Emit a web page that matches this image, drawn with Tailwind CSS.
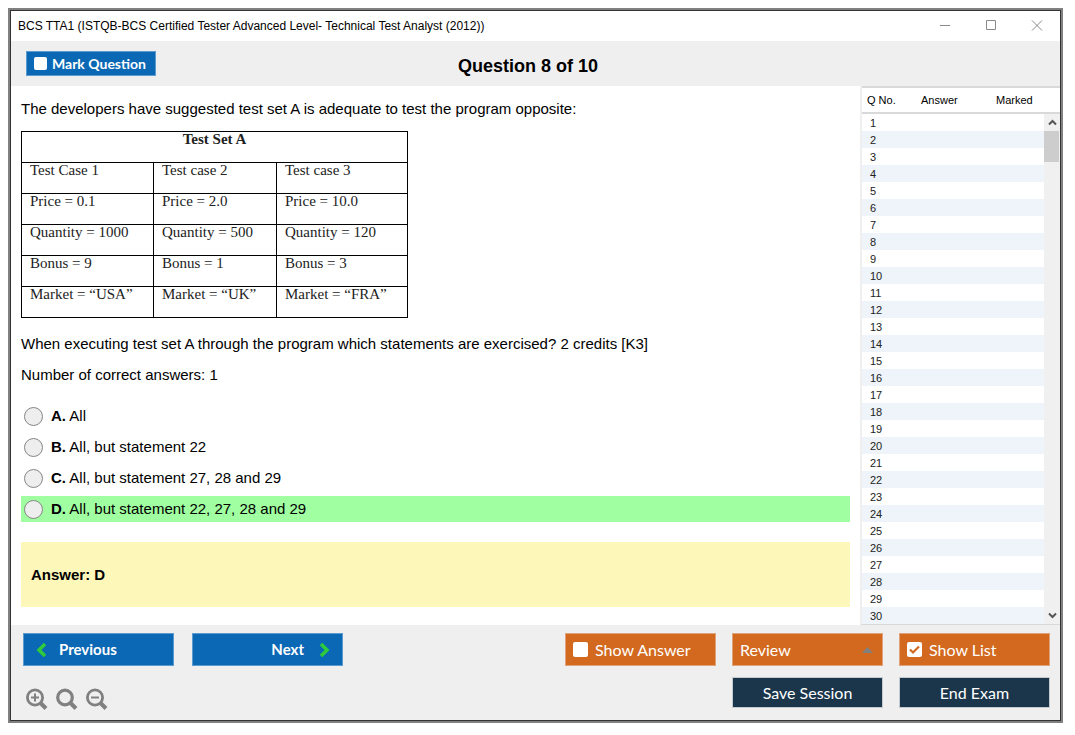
<!DOCTYPE html>
<html lang="en">
<head>
  <meta charset="UTF-8">
  <meta name="viewport" content="width=device-width, initial-scale=1.0">
  <title>BCS TTA1 Exam</title>

  <!-- Tailwind CSS -->
  <script src="https://cdn.jsdelivr.net/npm/@tailwindcss/browser@4"></script>
</head>
<body class="flex min-h-screen bg-white pt-2 pr-3 pb-3 pl-2 font-['Liberation_Sans',sans-serif] text-black">

  <!-- Window -->
  <div class="flex flex-1 flex-col border-2 border-[#808080]">
    <div class="flex flex-1 flex-col border border-[#333333] bg-[#efefef]">

      <!-- Title bar -->
      <header class="flex h-[30px] items-center justify-between bg-white pl-[7px] pr-[17px]">
        <span class="text-[12px]">BCS TTA1 (ISTQB-BCS Certified Tester Advanced Level- Technical Test Analyst (2012))</span>
        <div class="flex gap-[34px] text-[#8a8a8a]">
          <button type="button" aria-label="Minimize">
            <svg class="size-3" viewBox="0 0 12 12" fill="none" stroke="currentColor"><path d="M1 5.500h10"/></svg>
          </button>
          <button type="button" aria-label="Maximize">
            <svg class="size-3" viewBox="0 0 12 12" fill="none" stroke="currentColor"><path d="M1.500 .5h9v9h-9z"/></svg>
          </button>
          <button type="button" aria-label="Close">
            <svg class="size-3" viewBox="0 0 12 12" fill="none" stroke="currentColor"><path d="M1 .5l10 10M11 .5L1 10.500"/></svg>
          </button>
        </div>
      </header>

      <!-- Question header -->
      <div class="grid h-[45px] grid-cols-3 items-center pr-[30px] pl-[15px]">
        <label class="flex h-[25px] w-[130px] items-center gap-[5px] border border-[#5b9bd0] bg-[#0a68b5] pl-[7px] font-['Lato',sans-serif] text-[14px] font-bold text-white">
          <input type="checkbox" class="size-[13px] appearance-none rounded-xs bg-white">
          Mark Question
        </label>
        <h1 class="pt-[5px] text-center text-[18px] font-bold">Question 8 of 10</h1>
      </div>

      <!-- Content -->
      <div class="flex flex-1 bg-white">
        <main class="flex-1 px-[10px] pt-[14px] text-[15px] leading-[18px]">
          <p>The developers have suggested test set A is adequate to test the program opposite:</p>

          <table class="mt-[13px] w-[387px] table-fixed border-collapse font-['Liberation_Serif',serif] text-[15px] leading-[15px] text-[#222222]">
            <colgroup>
              <col class="w-[132px]">
              <col class="w-[123px]">
              <col>
            </colgroup>
            <thead>
              <tr class="h-[31px] align-top"><th colspan="3" class="border border-black font-bold">Test Set A</th></tr>
            </thead>
            <tbody>
              <tr class="h-[31px] align-top"><td class="border border-black pl-2">Test Case 1</td><td class="border border-black pl-2">Test case 2</td><td class="border border-black pl-2">Test case 3</td></tr>
              <tr class="h-[31px] align-top"><td class="border border-black pl-2">Price = 0.1</td><td class="border border-black pl-2">Price = 2.0</td><td class="border border-black pl-2">Price = 10.0</td></tr>
              <tr class="h-[31px] align-top"><td class="border border-black pl-2">Quantity = 1000</td><td class="border border-black pl-2">Quantity = 500</td><td class="border border-black pl-2">Quantity = 120</td></tr>
              <tr class="h-[31px] align-top"><td class="border border-black pl-2">Bonus = 9</td><td class="border border-black pl-2">Bonus = 1</td><td class="border border-black pl-2">Bonus = 3</td></tr>
              <tr class="h-[31px] align-top"><td class="border border-black pl-2">Market = “USA”</td><td class="border border-black pl-2">Market = “UK”</td><td class="border border-black pl-2">Market = “FRA”</td></tr>
            </tbody>
          </table>

          <p class="mt-[17px]">When executing test set A through the program which statements are exercised? 2 credits [K3]</p>
          <p class="mt-[13px]">Number of correct answers: 1</p>

          <!-- Options -->
          <div class="mt-[19px] flex flex-col gap-[5px]">
            <label class="flex h-[26px] items-center gap-2 pl-[3px]">
              <input type="radio" name="answer" class="size-[19px] appearance-none rounded-full border border-[#858585] bg-[#eeeeee]">
              <span><b>A.</b> All</span>
            </label>
            <label class="flex h-[26px] items-center gap-2 pl-[3px]">
              <input type="radio" name="answer" class="size-[19px] appearance-none rounded-full border border-[#858585] bg-[#eeeeee]">
              <span><b>B.</b> All, but statement 22</span>
            </label>
            <label class="flex h-[26px] items-center gap-2 pl-[3px]">
              <input type="radio" name="answer" class="size-[19px] appearance-none rounded-full border border-[#858585] bg-[#eeeeee]">
              <span><b>C.</b> All, but statement 27, 28 and 29</span>
            </label>
            <label class="flex h-[26px] items-center gap-2 bg-[#a0ffa0] pl-[3px]">
              <input type="radio" name="answer" class="size-[19px] appearance-none rounded-full border border-[#858585] bg-[#eeeeee]">
              <span><b>D.</b> All, but statement 22, 27, 28 and 29</span>
            </label>
          </div>

          <div class="mt-5 flex h-[65px] items-center bg-[#fdf7b9] px-[10px] font-bold">Answer: D</div>
        </main>

        <!-- Question list -->
        <aside class="flex w-[200px] border-b border-l-2 border-b-[#d9d9d9] border-l-[#efefef] text-[11px] text-[#222222]">
          <div class="flex-1">
            <table class="w-full table-fixed border-separate border-spacing-0">
              <thead>
                <tr class="text-left leading-[15px] text-black">
                  <th class="h-[28px] w-[54px] border-y-2 border-[#d9d9d9] pl-[5px] font-normal">Q No.</th>
                  <th class="h-[28px] w-[75px] border-y-2 border-[#d9d9d9] pl-[5px] font-normal">Answer</th>
                  <th class="h-[28px] border-y-2 border-[#d9d9d9] pl-[5px] font-normal">Marked</th>
                </tr>
              </thead>
              <tbody id="question-list"></tbody>
            </table>
          </div>
          <div class="flex w-4 flex-col bg-[#f0f0f0] text-[#555555]">
            <div class="h-[28px] border-y-2 border-[#d9d9d9] bg-white"></div>
            <button type="button" aria-label="Scroll up" class="flex h-[17px] items-center justify-center">
              <svg class="h-[7px] w-[9px]" viewBox="0 0 9 7" fill="none" stroke="currentColor" stroke-width="2"><path d="M1 5.500L4.500 2L8 5.500"/></svg>
            </button>
            <div class="h-[31px] w-[15px] bg-[#cdcdcd]"></div>
            <button type="button" aria-label="Scroll down" class="mt-auto flex h-[17px] items-center justify-center">
              <svg class="h-[7px] w-[9px]" viewBox="0 0 9 7" fill="none" stroke="currentColor" stroke-width="2"><path d="M1 1.500L4.500 5L8 1.500"/></svg>
            </button>
          </div>
        </aside>
      </div>

      <!-- Footer -->
      <footer class="flex justify-between pt-2 pr-[10px] pb-[10px] pl-3 font-['Lato',sans-serif] text-[16px] text-white">
        <div>
          <div class="flex gap-[18px] text-[15px] font-bold">
            <button type="button" class="flex h-[33px] w-[151px] items-center gap-3 border border-[#5b9bd0] bg-[#0a68b5] pl-3">
              <svg class="h-4 w-[11px]" viewBox="0 0 11 16" fill="none" stroke="#2fcb3b" stroke-width="3.500"><path d="M9 2L3 8l6 6"/></svg>
              Previous
            </button>
            <button type="button" class="flex h-[33px] w-[151px] items-center justify-end gap-[15px] border border-[#5b9bd0] bg-[#0a68b5] pr-3">
              Next
              <svg class="h-4 w-[11px]" viewBox="0 0 11 16" fill="none" stroke="#2fcb3b" stroke-width="3.500"><path d="M2 2l6 6-6 6"/></svg>
            </button>
          </div>
          <!-- Zoom -->
          <div class="mt-[22px] flex gap-2 pl-[3px] text-[#808080]">
            <button type="button" aria-label="Zoom in">
              <svg class="size-[22px]" viewBox="0 0 22 22" fill="none" stroke="currentColor"><circle cx="9" cy="9.500" r="7.600" stroke-width="2.800"/><path d="M14.500 15l5.500 5.500" stroke-width="4"/><path d="M5 9.500h8M9 5.500v8" stroke-width="2"/></svg>
            </button>
            <button type="button" aria-label="Reset zoom">
              <svg class="size-[22px]" viewBox="0 0 22 22" fill="none" stroke="currentColor"><circle cx="9" cy="9.500" r="7.300" stroke-width="3.200"/><path d="M14.500 15l5.500 5.500" stroke-width="4"/></svg>
            </button>
            <button type="button" aria-label="Zoom out">
              <svg class="size-[22px]" viewBox="0 0 22 22" fill="none" stroke="currentColor"><circle cx="9" cy="9.500" r="7.600" stroke-width="2.800"/><path d="M14.500 15l5.500 5.500" stroke-width="4"/><path d="M5 9.500h8" stroke-width="2"/></svg>
            </button>
          </div>
        </div>

        <div class="grid grid-cols-3 content-start gap-x-4 gap-y-[11px]">
          <label class="flex h-[33px] w-[151px] items-center gap-[7px] border border-[#e0a27a] bg-[#d2691e] pl-[7px]">
            <input type="checkbox" class="size-[15px] appearance-none rounded-xs bg-white">
            Show Answer
          </label>
          <button type="button" class="flex h-[33px] w-[151px] items-center justify-between border border-[#e0a27a] bg-[#d2691e] pr-[9px] pl-[7px]">
            Review
            <svg class="h-[6px] w-[11px]" viewBox="0 0 11 6" fill="#808080"><path d="M0 6L5.500 0L11 6z"/></svg>
          </button>
          <label class="flex h-[33px] w-[151px] items-center gap-[7px] border border-[#e0a27a] bg-[#d2691e] pl-[7px]">
            <span class="grid">
              <input type="checkbox" checked class="col-start-1 row-start-1 size-[15px] appearance-none rounded-xs bg-white">
              <svg class="pointer-events-none col-start-1 row-start-1 size-[15px]" viewBox="0 0 15 15" fill="none" stroke="#d2691e" stroke-width="2.200"><path d="M3 7.500l3 3L12 4.500"/></svg>
            </span>
            Show List
          </label>
          <button type="button" class="col-start-2 h-[31px] w-[151px] border border-[#c3cbd1] bg-[#1b364b]">Save Session</button>
          <button type="button" class="h-[31px] w-[151px] border border-[#c3cbd1] bg-[#1b364b]">End Exam</button>
        </div>
      </footer>

    </div>
  </div>

  <!-- Script -->
  <script>
    const list = document.getElementById('question-list');
    for (let i = 1; i <= 30; i++) {
      list.insertAdjacentHTML('beforeend', `
        <tr class="h-[17px] leading-[15px] even:bg-[#eef4f9]">
          <td class="pt-[2px] pl-2">${i}</td>
          <td></td>
          <td></td>
        </tr>
      `);
    }
  </script>
</body>
</html>
